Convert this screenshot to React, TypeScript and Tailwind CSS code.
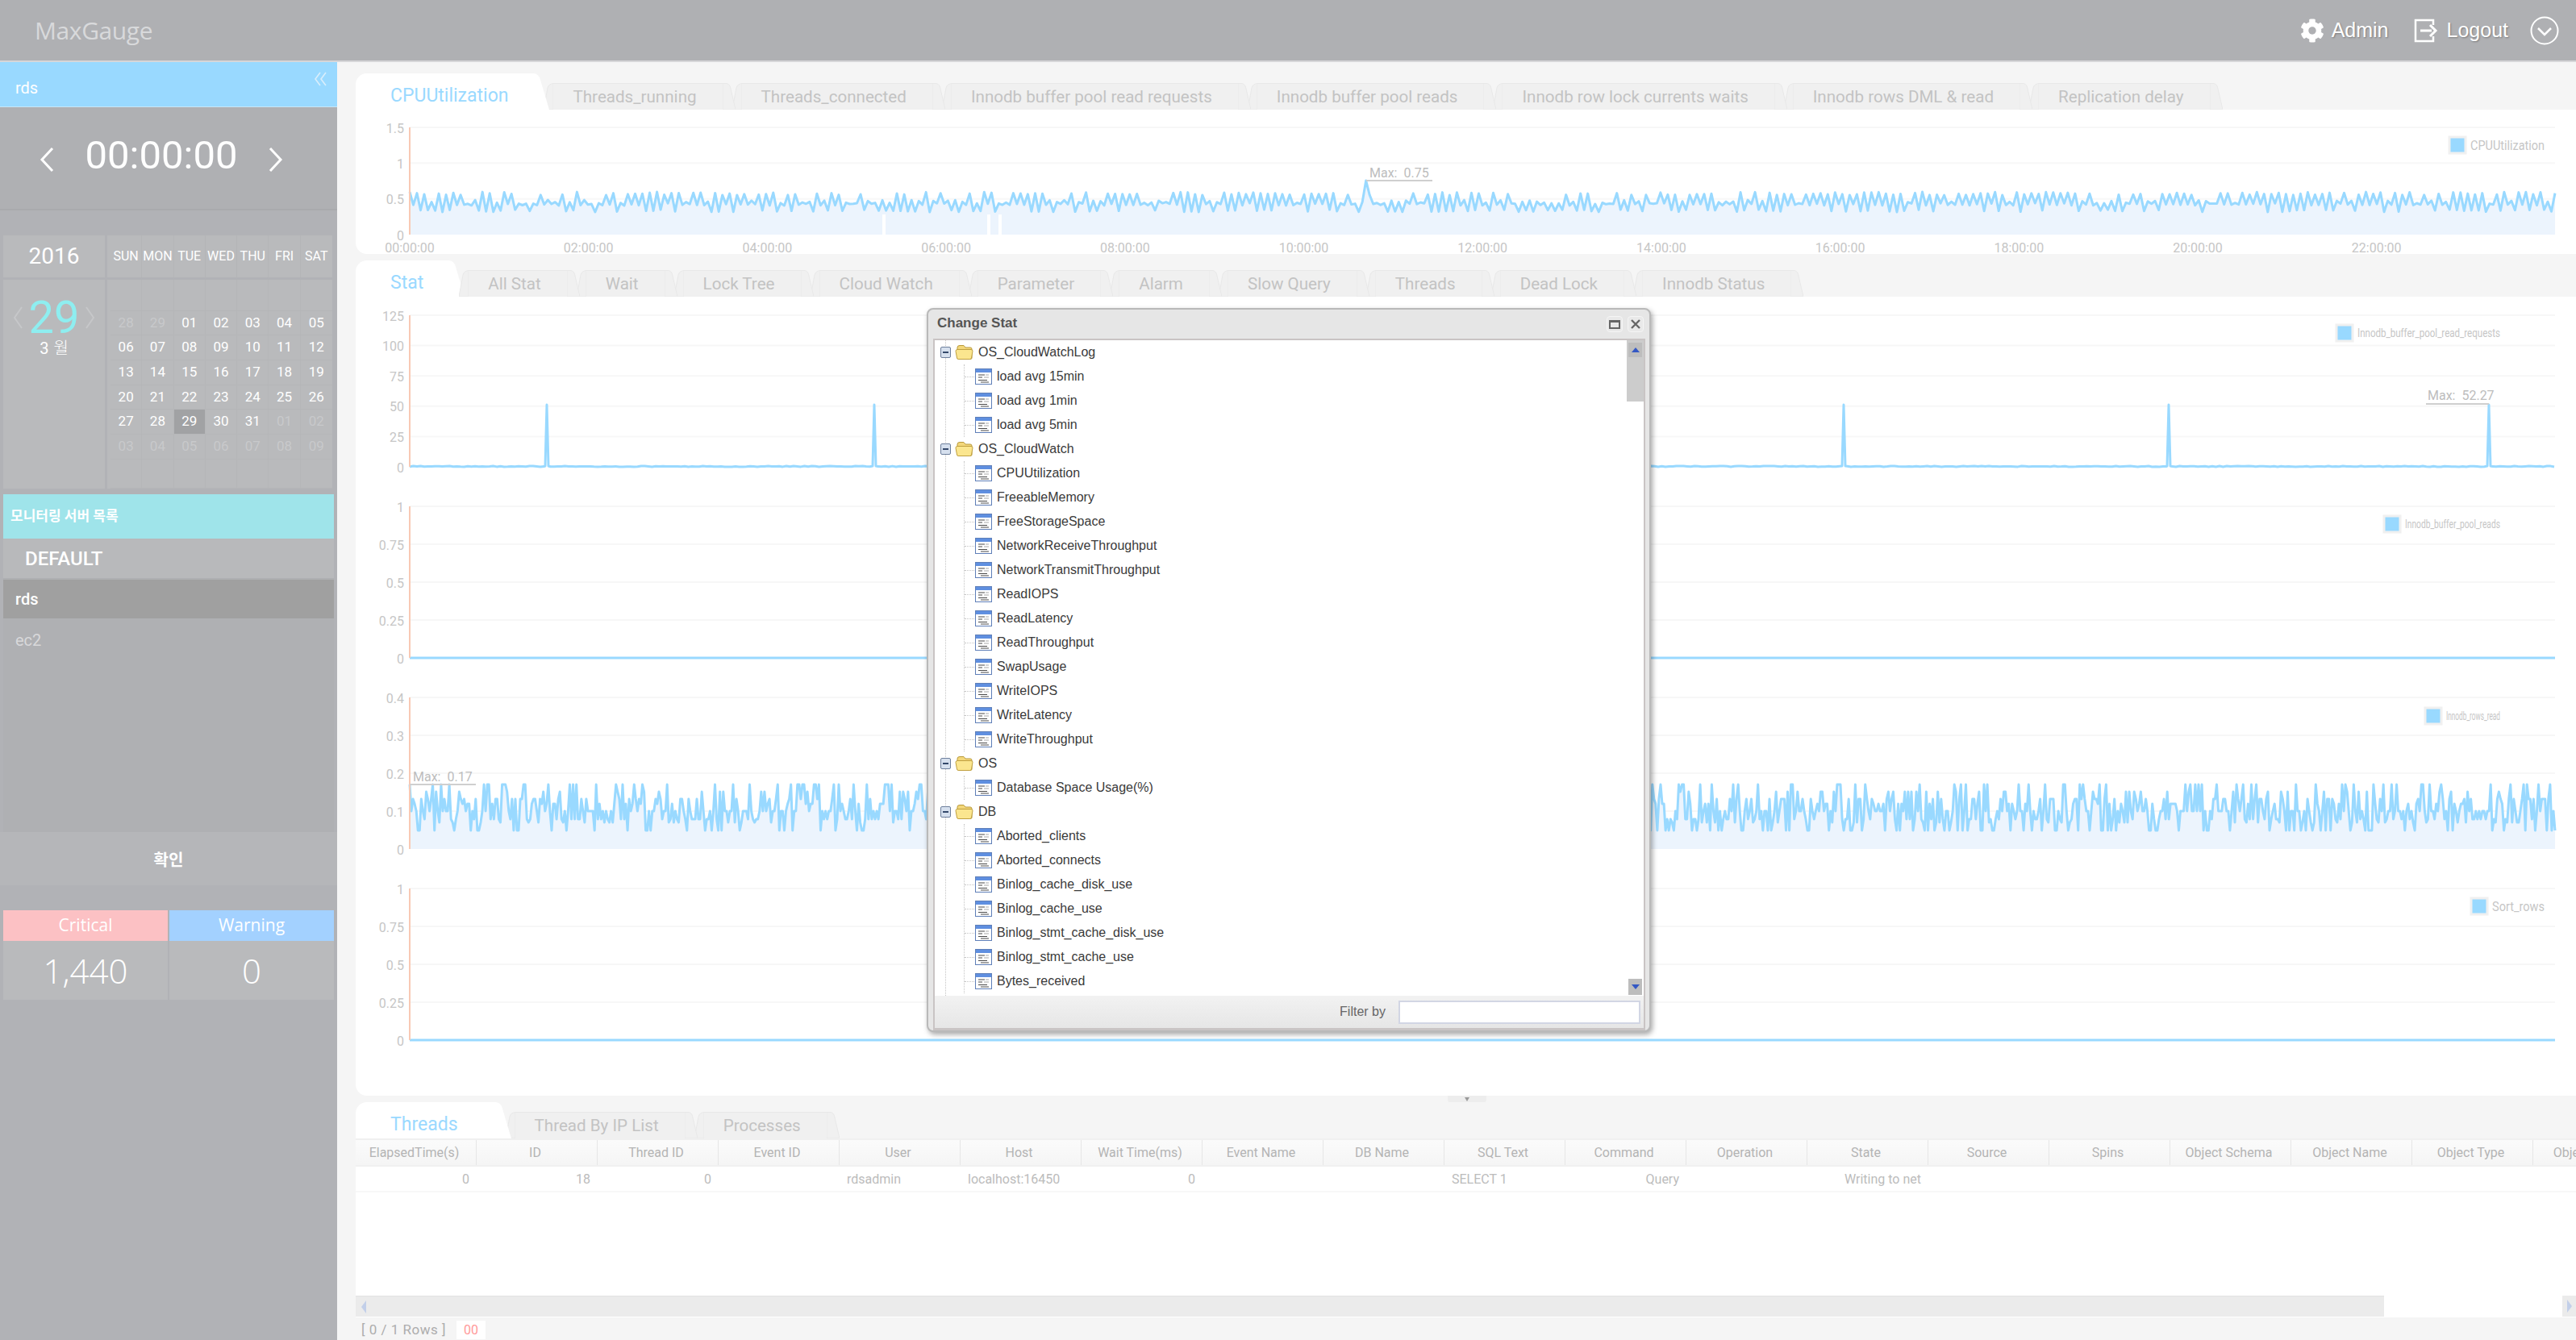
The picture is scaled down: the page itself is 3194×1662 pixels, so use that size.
import React from "react";
import { FaCog } from "react-icons/fa";

function rng(seed: number) {
  return () => {
    seed |= 0;
    seed = (seed + 0x6d2b79f5) | 0;
    let t = Math.imul(seed ^ (seed >>> 15), 1 | seed);
    t = (t + Math.imul(t ^ (t >>> 7), 61 | t)) ^ t;
    return ((t ^ (t >>> 14)) >>> 0) / 4294967296;
  };
}

const LX = 67;
const RX = 2727;

function cpuPoints() {
  const r = rng(7);
  const pts: [number, number][] = [];
  const n = 590;
  for (let i = 0; i <= n; i++) {
    const x = LX + ((RX - LX) * i) / n;
    let y: number;
    if (i % 2 === 0) y = r() < 0.62 ? 102 + r() * 4 : 112 + r() * 5;
    else y = r() < 0.5 ? 124 + r() * 3 : 116 + r() * 3;
    if (Math.abs(x - 1252) < 2.3) y = 88;
    pts.push([x, y]);
  }
  return pts;
}

function rowsPoints() {
  const r = rng(21);
  const levels = [131, 131, 140, 149, 149, 155, 164, 164, 164, 174, 174, 178, 188, 188];
  const pts: [number, number][] = [];
  const n = 1300;
  for (let i = 0; i <= n; i++) {
    const x = LX + ((RX - LX) * i) / n;
    const y = levels[Math.floor(r() * levels.length)];
    pts.push([x, i === 0 ? 131 : y]);
  }
  return pts;
}

function spikePoints() {
  const spikes = [237, 643, 1845, 2248, 2645];
  const r = rng(3);
  const pts: [number, number][] = [];
  let x = LX;
  while (x <= RX) {
    const sp = spikes.find((s) => Math.abs(s - x) < 2.5);
    if (sp) {
      pts.push([sp - 2, 210]);
      pts.push([sp, 134]);
      pts.push([sp + 2, 210]);
      x = sp + 4.5;
    } else {
      pts.push([x, 210 + r() * 1]);
      x += 4.5;
    }
  }
  return pts;
}

const toPath = (p: [number, number][]) => p.map((q, i) => `${i ? "L" : "M"}${q[0].toFixed(1)} ${q[1].toFixed(1)}`).join("");

const AXIS = "Roboto, sans-serif";

function Chart({
  height,
  top,
  plot,
  yLabels,
  legend,
  legendX,
  legendY,
  legendW,
  legendSize = 16,
  points,
  fill,
  flat,
  xLabels,
  max,
  gaps,
}: {
  height: number;
  top: number;
  plot: number;
  yLabels: string[];
  legend: string;
  legendX: number;
  legendY: number;
  legendW: number;
  legendSize?: number;
  points?: [number, number][];
  fill?: boolean;
  flat?: boolean;
  xLabels?: boolean;
  max?: { tx: number; ty: number; x1: number; x2: number; y: number; label: string };
  gaps?: number[];
}) {
  const bottom = top + plot;
  return (
    <svg width={2753} height={height} className="block shrink-0 overflow-visible">
      {yLabels.map((l, i) => {
        const y = top + (plot * i) / (yLabels.length - 1);
        return (
          <g key={l}>
            {i < yLabels.length - 1 && <line x1={LX} x2={RX} y1={y} y2={y} stroke="#f7f7f7" strokeWidth={2} />}
            <text x={60} y={y + 1} dy="0.35em" textAnchor="end" fontFamily={AXIS} fontSize={16} fill="#c6c6c6">
              {l}
            </text>
          </g>
        );
      })}
      {points && fill && <path d={`${toPath(points)}L${RX} ${bottom}L${LX} ${bottom}Z`} fill="#ecf4fd" />}
      {gaps && gaps.map((g) => <rect key={g} x={g} y={130} width={4} height={bottom - 130} fill="#ffffff" />)}
      {points && <path d={toPath(points)} fill="none" stroke="#99d9ff" strokeWidth={3} strokeLinejoin="round" />}
      {flat && <line x1={LX} x2={RX} y1={bottom} y2={bottom} stroke="#99d9ff" strokeWidth={3} />}
      <line x1={LX} x2={LX} y1={top} y2={bottom} stroke="#f8c9b4" strokeWidth={2} />
      {max && (
        <g>
          <line x1={max.x1} x2={max.x2} y1={max.y} y2={max.y} stroke="#cfcfcf" strokeWidth={2} />
          <text x={max.tx} y={max.ty} dy="0.35em" fontFamily={AXIS} fontSize={16} fill="#bdbdbd" xmlSpace="preserve">
            {max.label}
          </text>
        </g>
      )}
      <rect x={legendX} y={legendY - 10} width={20} height={20} fill="#99d9ff" stroke="#f0f0f0" strokeWidth={3} />
      <text x={legendX + 26} y={legendY} dy="0.35em" fontFamily={AXIS} fontSize={legendSize} fill="#c6c6c6" textLength={legendW} lengthAdjust="spacingAndGlyphs">
        {legend}
      </text>
      {xLabels &&
        Array.from({ length: 12 }, (_, i) => {
          const h = String(i * 2).padStart(2, "0");
          return (
            <text key={h} x={LX + 221.7 * i} y={171} dy="0.35em" textAnchor="middle" fontFamily={AXIS} fontSize={16} fill="#c6c6c6">
              {`${h}:00:00`}
            </text>
          );
        })}
    </svg>
  );
}

function ActiveTab({ label, wide }: { label: string; wide?: boolean }) {
  return (
    <div className="relative z-10 flex h-[45px] items-stretch">
      <div className={`flex items-center rounded-tl-[14px] bg-white pl-[43px] pt-[11px] text-[23px] text-[#9ad9ff] ${wide ? "pr-[41px]" : "pr-[26px]"}`}>
        {label}
      </div>
      <svg width={25} height={45} className="block">
        <path d="M0 0H5Q12 0 14 8L25 45H0Z" fill="#ffffff" />
      </svg>
    </div>
  );
}

function Tab({ label, z }: { label: string; z: number }) {
  return (
    <div className="-ml-[4px] flex h-[33px] items-stretch self-end first:-ml-[7px]" style={{ zIndex: z }}>
      <svg width={12} height={33} className="block">
        <path d="M0 33L5 6Q6.5 1 12 .5V33Z" fill="#f0f0f0" stroke="#e8e8e8" />
      </svg>
      <div className="flex items-center whitespace-nowrap border-t border-[#e8e8e8] bg-[#f0f0f0] pl-[24px] pr-[32px] text-[20.6px] text-[#c3c3c3]">
        {label}
      </div>
      <svg width={16} height={33} className="block">
        <path d="M0 .5H4Q8 .5 9.5 5L16 33H0Z" fill="#f0f0f0" stroke="#e8e8e8" />
      </svg>
    </div>
  );
}

function TabRow({ active, tabs, wide }: { active: string; tabs: string[]; wide?: boolean }) {
  return (
    <div className="flex h-[45px] shrink-0 items-end">
      <ActiveTab label={active} wide={wide} />
      <div className="flex items-end">
        {tabs.map((t, i) => (
          <Tab key={t} label={t} z={tabs.length - i} />
        ))}
      </div>
    </div>
  );
}

const dateRows = [
  ["28", "29", "01", "02", "03", "04", "05"],
  ["06", "07", "08", "09", "10", "11", "12"],
  ["13", "14", "15", "16", "17", "18", "19"],
  ["20", "21", "22", "23", "24", "25", "26"],
  ["27", "28", "29", "30", "31", "01", "02"],
  ["03", "04", "05", "06", "07", "08", "09"],
];

function Calendar() {
  const week = ["SUN", "MON", "TUE", "WED", "THU", "FRI", "SAT"];
  const cells: { t: string; dim: boolean; sel: boolean }[] = [];
  for (let i = 0; i < 7; i++) cells.push({ t: "", dim: false, sel: false });
  dateRows.forEach((row, r) =>
    row.forEach((t, c) => {
      const dim = (r === 0 && c < 2) || (r === 4 && c > 4) || r === 5;
      cells.push({ t, dim, sel: r === 4 && c === 2 });
    }),
  );
  for (let i = 0; i < 7; i++) cells.push({ t: "", dim: false, sel: false });
  return (
    <div className="mt-[31px] grid h-[314px] grid-cols-[126px_279px] grid-rows-[52px_259px] gap-[3px] px-[4px]">
      <div className="flex items-center justify-center bg-[#b9babc] text-[28px] text-white">2016</div>
      <div className="grid grid-cols-7 bg-[#b9babc] pl-[4px]">
        {week.map((w) => (
          <div key={w} className="flex items-center justify-center border-r border-[#b4b5b7] text-[16px] text-white last:border-r-0">
            {w}
          </div>
        ))}
      </div>
      <div className="flex flex-col items-center bg-[#b9babc]">
        <div className="mt-[19px] flex items-center gap-[7px]">
          <svg width={14} height={30}>
            <path d="M12 2L3 15L12 28" fill="none" stroke="#c6c7c9" strokeWidth={2} />
          </svg>
          <span className="text-[56px] leading-[56px] text-[#8eeef0]">29</span>
          <svg width={14} height={30}>
            <path d="M2 2L11 15L2 28" fill="none" stroke="#c6c7c9" strokeWidth={2} />
          </svg>
        </div>
        <div className="flex items-center gap-[6px] text-[20px] leading-[20px] text-white">
          <span>3</span>
          <span className="font-light">월</span>
        </div>
      </div>
      <div className="grid grid-cols-7 grid-rows-[38.5px_repeat(6,30.7px)_1fr] bg-[#b9babc] pl-[4px]">
        {cells.map((c, i) => (
          <div
            key={i}
            className={`flex items-center justify-center border-b border-r border-[#b5b6b8] text-[17px] [&:nth-child(7n)]:border-r-0 ${c.dim ? "text-[#c8c9cb]" : "text-white"} ${c.sel ? "bg-[#a1a2a4]" : ""}`}
          >
            {c.t}
          </div>
        ))}
      </div>
    </div>
  );
}

function Sidebar() {
  return (
    <aside className="flex w-[418px] shrink-0 flex-col bg-[#b1b2b6] text-white">
      <div className="flex h-[56px] shrink-0 items-center justify-between border-b border-[#c6e6f8] bg-[#99d9ff] pb-[1px] pl-[19px] pr-[13px]">
        <span className="pt-[10px] text-[20px]">rds</span>
        <svg width={15} height={20} className="-mt-[12px]">
          <path d="M7 2L1 10L7 18M14 2L8 10L14 18" fill="none" stroke="#d9eefb" strokeWidth={1.6} />
        </svg>
      </div>
      <div className="flex h-[128px] shrink-0 justify-center gap-[39px] border-b-2 border-[#a9aaad] bg-[#afb0b3] pr-[18px]">
        <svg width={18} height={32} className="mt-[49px]">
          <path d="M16 2L3 16L16 30" fill="none" stroke="#ffffff" strokeWidth={3} />
        </svg>
        <span className="pt-[30px] text-[49px] leading-[60px]">00:00:00</span>
        <svg width={18} height={32} className="mt-[49px]">
          <path d="M2 2L15 16L2 30" fill="none" stroke="#ffffff" strokeWidth={3} />
        </svg>
      </div>
      <Calendar />
      <div className="mx-[4px] mt-[7px] flex h-[55px] shrink-0 items-center bg-[#9fe4ea] pl-[9px] text-[17px] font-bold">모니터링 서버 목록</div>
      <div className="mx-[4px] flex h-[51px] shrink-0 items-center border-b-2 border-[#aeafb1] bg-[#b8b9bb] pl-[27px] text-[24px] font-medium">DEFAULT</div>
      <div className="mx-[4px] flex h-[48px] shrink-0 items-center bg-[#a0a0a0] pl-[15px] text-[20px] font-medium">rds</div>
      <div className="mx-[4px] h-[265px] shrink-0 bg-[#afb0b3] pl-[15px] pt-[12px] text-[20px] text-[#d8d8da]">ec2</div>
      <div className="flex h-[66px] shrink-0 items-center justify-center bg-[#b5b6b9] pt-[4px] text-[20px] font-bold">확인</div>
      <div className="ml-[4px] mr-[4px] mt-[31px] grid grid-cols-[204px_204px] gap-x-[2px] [font-family:Open_Sans,sans-serif]">
        <div className="flex h-[38px] items-center justify-center bg-[#fcc1c4] text-[21px]">Critical</div>
        <div className="flex h-[38px] items-center justify-center bg-[#a3d1ff] text-[21px]">Warning</div>
        <div className="flex h-[73px] items-center justify-center bg-[#b9babc] text-[42px] font-light">1,440</div>
        <div className="flex h-[73px] items-center justify-center bg-[#b9babc] text-[42px] font-light">0</div>
      </div>
    </aside>
  );
}

function Header() {
  return (
    <header className="flex h-[77px] shrink-0 items-center justify-between border-b-2 border-[#d6d6d8] bg-[#afb0b3] pl-[43px] pr-[21px] text-white">
      <span className="text-[30px] tracking-[-0.4px] text-[#d8d9db] [font-family:Open_Sans,sans-serif]">MaxGauge</span>
      <div className="flex items-center text-[25px] [font-family:Liberation_Sans,sans-serif] [text-shadow:1px_1px_2px_rgba(0,0,0,0.3)]">
        <FaCog size={30} className="mr-[9px]" />
        <span>Admin</span>
        <svg width={31} height={30} className="ml-[31px] mr-[10px]" viewBox="0 0 31 30">
          <path d="M24 8V2H2V28H24V22" fill="none" stroke="#ffffff" strokeWidth={2.5} />
          <path d="M8 15H22M20 8L27 15L20 22" fill="none" stroke="#ffffff" strokeWidth={3} />
        </svg>
        <span>Logout</span>
        <svg width={36} height={36} className="ml-[27px]" viewBox="0 0 36 36">
          <circle cx={18} cy={18} r={16.5} fill="none" stroke="#ffffff" strokeWidth={2} />
          <path d="M10 15L18 23L26 15" fill="none" stroke="#ffffff" strokeWidth={2.5} />
        </svg>
      </div>
    </header>
  );
}

const columns = [
  "ElapsedTime(s)", "ID", "Thread ID", "Event ID", "User", "Host", "Wait Time(ms)", "Event Name", "DB Name", "SQL Text",
  "Command", "Operation", "State", "Source", "Spins", "Object Schema", "Object Name", "Object Type", "Object Owner",
];
const rowCells: Record<string, { t: string; left?: boolean }> = {
  "ElapsedTime(s)": { t: "0" },
  ID: { t: "18" },
  "Thread ID": { t: "0" },
  User: { t: "rdsadmin", left: true },
  Host: { t: "localhost:16450", left: true },
  "Wait Time(ms)": { t: "0" },
  "SQL Text": { t: "SELECT 1", left: true },
  Command: { t: "Query" },
  State: { t: "Writing to net" },
};

function ThreadTable() {
  return (
    <div className="flex min-h-0 flex-1 flex-col bg-white">
      <div className="h-[195px] overflow-hidden">
        <div className="flex h-[35px] border-y-2 border-[#f0f0f0] bg-gradient-to-b from-[#fbfbfb] to-[#f5f5f5]">
          {columns.map((c) => (
            <div key={c} className="flex w-[150px] shrink-0 items-center justify-center overflow-hidden whitespace-nowrap border-r border-[#e6e6e6] pr-[4px] text-[16px] text-[#b4b4b4]">
              {c}
            </div>
          ))}
        </div>
        <div className="flex h-[32px] border-b-2 border-[#f8f8f8]">
          {columns.map((c) => {
            const cell = rowCells[c];
            return (
              <div key={c} className={`flex w-[150px] shrink-0 items-center whitespace-nowrap px-[9px] pt-[2px] text-[16px] text-[#bcbcbc] ${cell && cell.left ? "justify-start" : "justify-end"}`}>
                {cell ? cell.t : ""}
              </div>
            );
          })}
        </div>
      </div>
      <div className="flex h-[26px] shrink-0 bg-white">
        <div className="flex w-[2515px] items-center border-t border-[#e2e2e2] bg-[#ebebeb] pl-[5px]">
          <svg width={10} height={18}>
            <path d="M8 1L2 9L8 17Z" fill="#c2cfe9" />
          </svg>
        </div>
        <div className="flex-1" />
        <div className="flex w-[17px] items-center justify-center bg-[#ebebeb]">
          <svg width={10} height={18}>
            <path d="M2 1L8 9L2 17Z" fill="#c2cfe9" />
          </svg>
        </div>
      </div>
    </div>
  );
}

type Row = { t: string; folder?: boolean };
const tree: Row[] = [
  { t: "OS_CloudWatchLog", folder: true },
  { t: "load avg 15min" }, { t: "load avg 1min" }, { t: "load avg 5min" },
  { t: "OS_CloudWatch", folder: true },
  { t: "CPUUtilization" }, { t: "FreeableMemory" }, { t: "FreeStorageSpace" }, { t: "NetworkReceiveThroughput" },
  { t: "NetworkTransmitThroughput" }, { t: "ReadIOPS" }, { t: "ReadLatency" }, { t: "ReadThroughput" }, { t: "SwapUsage" },
  { t: "WriteIOPS" }, { t: "WriteLatency" }, { t: "WriteThroughput" },
  { t: "OS", folder: true },
  { t: "Database Space Usage(%)" },
  { t: "DB", folder: true },
  { t: "Aborted_clients" }, { t: "Aborted_connects" }, { t: "Binlog_cache_disk_use" }, { t: "Binlog_cache_use" },
  { t: "Binlog_stmt_cache_disk_use" }, { t: "Binlog_stmt_cache_use" }, { t: "Bytes_received" },
];

function LeafIcon() {
  return (
    <svg width={21} height={20} className="shrink-0" viewBox="0 0 21 20">
      <rect x={0.5} y={0.5} width={20} height={19} fill="#ffffff" stroke="#5f7fb8" />
      <rect x={1} y={1} width={19} height={4} fill="#5f8fe0" />
      <path d="M4 8H12M4 11H9M4 14.5H15M7 17H17" stroke="#4a4a4a" strokeWidth={1.2} />
      <path d="M13 8H17M11 11H17" stroke="#a9a9a9" strokeWidth={1.2} />
    </svg>
  );
}

function FolderIcon() {
  return (
    <svg width={23} height={20} className="shrink-0" viewBox="0 0 23 20">
      <path d="M3 4Q3 1.5 6 1.5H11L13 4H19Q21 4 21 6V17Q21 18.5 19 18.5H5Q3 18.5 3 17Z" fill="#f3d77a" stroke="#b99a3c" />
      <path d="M1 8.5Q1 6.5 3 6.5H20Q22 6.5 22 8.5L20.5 17Q20 18.5 18.5 18.5H4.5Q3 18.5 2.5 17Z" fill="#fbe68f" stroke="#c0a040" />
    </svg>
  );
}

function MinusBox() {
  return (
    <svg width={13} height={14} className="relative z-10 shrink-0" viewBox="0 0 13 14">
      <rect x={0.5} y={0.5} width={12} height={13} rx={1.5} fill="#d6e0ee" stroke="#6d7f9c" />
      <path d="M3 7H10" stroke="#34496b" strokeWidth={2} />
    </svg>
  );
}

function Dialog() {
  return (
    <div className="absolute left-[1149px] top-[382px] z-20 flex h-[898px] w-[898px] flex-col rounded-[8px] border-2 border-[#b9b9b9] bg-[#e6e6e6] pl-[6px] pr-[5px] shadow-[2px_3px_6px_rgba(0,0,0,0.35)]">
      <div className="flex h-[36px] shrink-0 items-center justify-between pl-[5px] pr-[1px] text-[17px] font-bold text-[#555] [font-family:Liberation_Sans,sans-serif]">
        <span className="-mt-[2px]">Change Stat</span>
        <div className="flex gap-[6px] pr-[1px]">
          <div className="flex h-[20px] w-[20px] items-center justify-center rounded-[4px] border border-[#f5f5f5] bg-[#e9e9e9]">
            <div className="h-[11px] w-[14px] border-2 border-t-[3px] border-[#666]" />
          </div>
          <div className="flex h-[20px] w-[20px] items-center justify-center rounded-[4px] border border-[#f5f5f5] bg-[#e9e9e9]">
            <svg width={14} height={14}>
              <path d="M2 2L12 12M12 2L2 12" stroke="#666" strokeWidth={2.4} />
            </svg>
          </div>
        </div>
      </div>
      <div className="relative flex min-h-0 flex-1 flex-col border-2 border-b-[3px] border-[#c9c4c4]">
        <div className="relative h-[813px] shrink-0 overflow-hidden bg-white text-[16px] text-[#3a3a3a] [font-family:Liberation_Sans,sans-serif]">
          <div className="ml-[13px] h-full border-l border-dotted border-[#c4c4c4]">
            {(() => {
              const out: React.ReactNode[] = [];
              let i = 0;
              while (i < tree.length) {
                const f = tree[i];
                const leaves: Row[] = [];
                let j = i + 1;
                while (j < tree.length && !tree[j].folder) {
                  leaves.push(tree[j]);
                  j++;
                }
                out.push(
                  <div key={f.t}>
                    <div className="-ml-[7px] flex h-[30px] items-center">
                      <MinusBox />
                      <span className="ml-[5px]">
                        <FolderIcon />
                      </span>
                      <span className="ml-[6px]">{f.t}</span>
                    </div>
                    <div className="ml-[22px] border-l border-dotted border-[#c4c4c4]">
                      {leaves.map((l) => (
                        <div key={l.t} className="flex h-[30px] items-center">
                          <span className="mr-[1px] w-[12px] border-t border-dotted border-[#c4c4c4]" />
                          <LeafIcon />
                          <span className="ml-[6px]">{l.t}</span>
                        </div>
                      ))}
                    </div>
                  </div>,
                );
                i = j;
              }
              return out;
            })()}
          </div>
          <div className="absolute right-0 top-0 flex h-[76px] w-[21px] justify-center bg-[#cccccc] pt-[3px]">
            <div className="flex h-[18px] w-[17px] items-center justify-center bg-[#bdbdbd]">
              <svg width={12} height={8}>
                <path d="M6 1L11 7H1Z" fill="#3458c4" />
              </svg>
            </div>
          </div>
          <div className="absolute bottom-[1px] right-[2px] flex h-[20px] w-[17px] items-center justify-center bg-[#bdbdbd]">
            <svg width={12} height={8}>
              <path d="M6 7L11 1H1Z" fill="#3458c4" />
            </svg>
          </div>
        </div>
        <div className="flex flex-1 items-center justify-end gap-[16px] bg-gradient-to-b from-[#f2f2f2] to-[#e6e6e6] pr-[4px] text-[16px] text-[#666] [font-family:Liberation_Sans,sans-serif]">
          <span>Filter by</span>
          <div className="h-[29px] w-[300px] border-2 border-[#d2d6e4] bg-white" />
        </div>
      </div>
    </div>
  );
}

export default function App() {
  return (
    <div className="relative flex h-[1662px] w-[3194px] flex-col overflow-hidden bg-[#f5f5f5] [font-family:Roboto,Noto_Sans_CJK_KR,sans-serif]">
      <Header />
      <div className="flex min-h-0 flex-1">
        <Sidebar />
        <main className="ml-[23px] flex min-w-0 flex-1 flex-col pt-[14px]">
          <TabRow
            active="CPUUtilization"
            tabs={["Threads_running", "Threads_connected", "Innodb buffer pool read requests", "Innodb buffer pool reads", "Innodb row lock currents waits", "Innodb rows DML & read", "Replication delay"]}
          />
          <section className="h-[179px] shrink-0 rounded-bl-[14px] bg-white">
            <Chart
              height={179}
              top={22}
              plot={133}
              yLabels={["1.5", "1", "0.5", "0"]}
              legend="CPUUtilization"
              legendX={2596}
              legendY={44}
              legendW={92}
              points={cpuPoints()}
              fill
              xLabels
              gaps={[653, 783, 797]}
              max={{ tx: 1257, ty: 78, x1: 1253, x2: 1335, y: 88, label: "Max:  0.75" }}
            />
          </section>
          <div className="mt-[8px]">
            <TabRow active="Stat" tabs={["All Stat", "Wait", "Lock Tree", "Cloud Watch", "Parameter", "Alarm", "Slow Query", "Threads", "Dead Lock", "Innodb Status"]} />
          </div>
          <section className="relative flex h-[991px] shrink-0 flex-col rounded-bl-[14px] bg-white">
            <Chart
              height={237}
              top={23}
              plot={188}
              yLabels={["125", "100", "75", "50", "25", "0"]}
              legend="Innodb_buffer_pool_read_requests"
              legendX={2456}
              legendY={45}
              legendW={177}
              legendSize={14}
              points={spikePoints()}
              max={{ tx: 2569, ty: 122, x1: 2567, x2: 2645, y: 133, label: "Max:  52.27" }}
            />
            <Chart height={237} top={23} plot={188} yLabels={["1", "0.75", "0.5", "0.25", "0"]} legend="Innodb_buffer_pool_reads" legendX={2515} legendY={45} legendW={118} legendSize={14} flat />
            <Chart
              height={237}
              top={23}
              plot={188}
              yLabels={["0.4", "0.3", "0.2", "0.1", "0"]}
              legend="Innodb_rows_read"
              legendX={2566}
              legendY={46}
              legendW={67}
              legendSize={14}
              points={rowsPoints()}
              fill
              max={{ tx: 71, ty: 121, x1: 67, x2: 149, y: 131, label: "Max:  0.17" }}
            />
            <Chart height={237} top={23} plot={188} yLabels={["1", "0.75", "0.5", "0.25", "0"]} legend="Sort_rows" legendX={2623} legendY={45} legendW={65} flat />
            <div className="absolute -bottom-[8px] left-[1354px] flex h-[8px] w-[48px] items-center justify-center rounded-b-[3px] bg-[#ededed]">
              <svg width={8} height={6}>
                <path d="M1 1H7L4 6Z" fill="#9a9a9a" />
              </svg>
            </div>
          </section>
          <div className="mt-[8px] flex min-h-0 flex-1 flex-col">
            <TabRow active="Threads" wide tabs={["Thread By IP List", "Processes"]} />
            <ThreadTable />
            <div className="flex h-[28px] shrink-0 items-center pl-[7px] pt-[3px] text-[17px] tracking-[0.5px] text-[#adadad]">
              <span className="w-[118px] whitespace-pre">[ 0 / 1 Rows ]</span>
              <span className="flex h-[23px] w-[36px] items-center justify-center bg-white text-[16px] tracking-normal text-[#ff9a9a]">00</span>
            </div>
          </div>
        </main>
      </div>
      <Dialog />
    </div>
  );
}
